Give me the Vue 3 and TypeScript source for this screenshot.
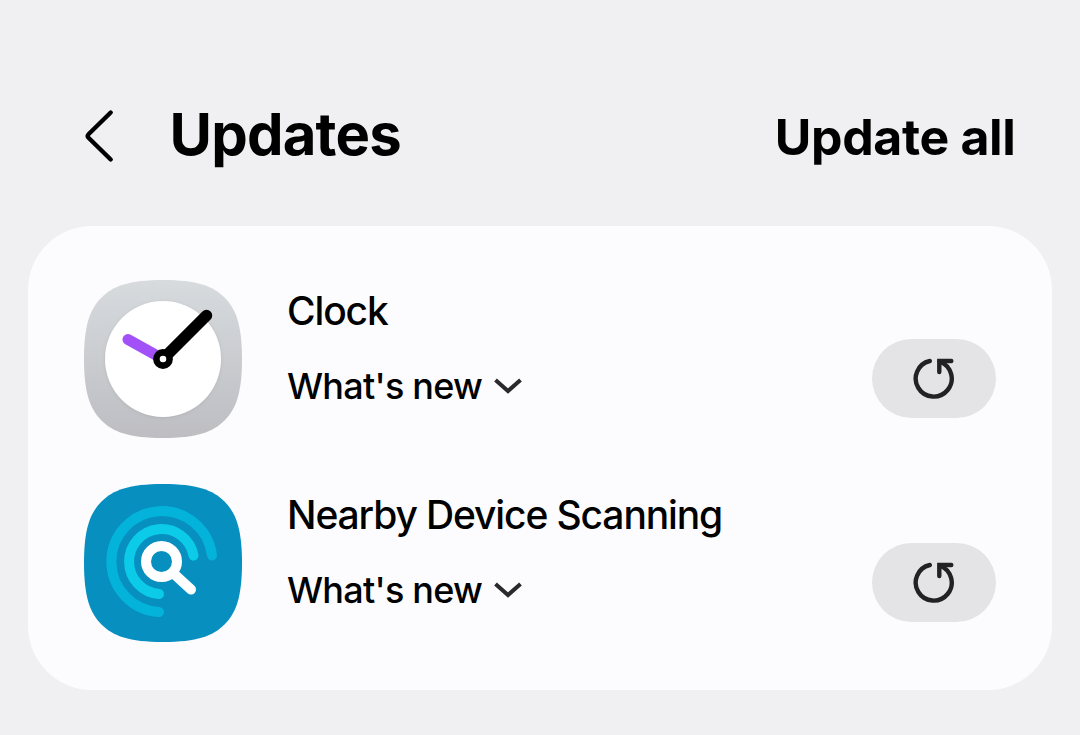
<script setup lang="ts">
interface AppUpdate {
  id: 'clock' | 'scan'
  name: string
}

const updates: AppUpdate[] = [
  { id: 'clock', name: 'Clock' },
  { id: 'scan', name: 'Nearby Device Scanning' },
]

const squircle =
  'M0 79C0 45 6 29 17.500 17.500S45 0 79 0S129 6 140.500 17.500S158 45 158 79S152 129 140.500 140.500S113 158 79 158S29 152 17.500 140.500S0 113 0 79Z'
</script>

<template>
  <main class="screen">
    <header class="bar">
      <button class="back" aria-label="Back">
        <svg width="32" height="56" viewBox="0 0 32 56">
          <path d="M26.700 4.5L4.500 26.2Q2.700 28 4.500 29.8L26.700 51.5" fill="none" stroke="#000" stroke-width="4.4" stroke-linecap="round" />
        </svg>
      </button>
      <h1 class="title">Updates</h1>
      <button class="all">Update all</button>
    </header>

    <section class="card">
      <article v-for="app in updates" :key="app.id" class="row">
        <svg v-if="app.id === 'clock'" class="icon" viewBox="0 0 158 158">
          <defs>
            <linearGradient id="silver" x1="0" y1="0" x2="0" y2="1">
              <stop offset="0" stop-color="#d7dbde" />
              <stop offset="1" stop-color="#bdbdc2" />
            </linearGradient>
            <filter id="soft" x="-10%" y="-10%" width="120%" height="120%">
              <feDropShadow dx="0" dy="0.5" stdDeviation="1.5" flood-color="#777" flood-opacity="0.25" />
            </filter>
          </defs>
          <path :d="squircle" fill="url(#silver)" />
          <circle cx="79" cy="79" r="58" fill="#fff" filter="url(#soft)" />
          <path d="M44 59.5L79 79" stroke="#a251f8" stroke-width="11" stroke-linecap="round" />
          <path d="M79 79L122.500 35.500" stroke="#000" stroke-width="11.500" stroke-linecap="round" />
          <circle cx="79" cy="79" r="6.600" fill="#fff" stroke="#000" stroke-width="6.600" />
        </svg>
        <svg v-else class="icon" viewBox="0 0 158 158">
          <path :d="squircle" fill="#078fc0" />
          <g fill="none" stroke-linecap="round">
            <path d="M128 71.500A50.500 50.500 0 1 0 75 128" stroke="#04b3da" stroke-width="10" />
            <path d="M109.500 71.500A32.500 32.500 0 1 0 75 110" stroke="#0ccbe9" stroke-width="10" />
            <circle cx="77.500" cy="77.500" r="15.500" stroke="#fff" stroke-width="10" />
            <path d="M89 89L107 105.500" stroke="#fff" stroke-width="10" />
          </g>
        </svg>

        <div class="info">
          <h2 class="name">{{ app.name }}</h2>
          <button class="news">
            <span class="label">What's new</span>
            <svg width="28" height="16" viewBox="0 0 28 16">
              <path d="M1.500 2L14 13L26.500 2" fill="none" stroke="#2a2a2c" stroke-width="4" />
            </svg>
          </button>
        </div>

        <button class="update" aria-label="Update">
          <svg width="44" height="44" viewBox="0 0 44 44" fill="none" stroke="#222224" stroke-width="4.400">
            <path d="M17.800 4A18 18 0 1 0 28 4.700" stroke-linecap="round" />
            <path d="M27.300 15V4H39.300" stroke-linecap="round" />
          </svg>
        </button>
      </article>
    </section>
  </main>
</template>

<style>
body {
  margin: 0;
  background: #f0f0f2;
}
</style>

<style scoped>
.screen {
  box-sizing: border-box;
  width: 1080px;
  height: 735px;
  padding: 94px 28px 0;
  overflow: hidden;
  background: #f0f0f2;
  color: #000;
  font-family: Inter, "Noto Sans", sans-serif;
}
button {
  margin: 0;
  padding: 0;
  border: 0;
  background: none;
  color: inherit;
  font: inherit;
}
h1,
h2 {
  margin: 0;
}
svg {
  display: block;
  flex: none;
}
.bar {
  display: flex;
  align-items: flex-start;
  height: 132px;
  padding: 0 36.500px 0 55.500px;
}
.back {
  padding-top: 14px;
}
.title {
  margin-left: 54px;
  font-size: 58px;
  font-weight: 700;
  line-height: 80px;
  letter-spacing: -0.800px;
  white-space: nowrap;
}
.all {
  margin-left: auto;
  font-size: 50px;
  font-weight: 700;
  line-height: 86px;
  letter-spacing: -0.350px;
  white-space: nowrap;
}
.card {
  box-sizing: border-box;
  display: flex;
  flex-direction: column;
  gap: 46px;
  height: 464px;
  padding: 54px 56px 0;
  border-radius: 64px;
  background: #fcfcfe;
}
.row {
  display: flex;
  height: 158px;
}
.icon {
  width: 158px;
  height: 158px;
}
.info {
  flex: 1;
  margin-left: 45px;
}
.name {
  padding-top: 6px;
  font-size: 39px;
  font-weight: 550;
  line-height: 50px;
  letter-spacing: -1.120px;
  white-space: nowrap;
}
.news {
  display: flex;
  align-items: center;
  gap: 12px;
  margin-top: 25px;
  font-size: 36px;
  font-weight: 550;
  line-height: 50px;
  letter-spacing: -0.750px;
  white-space: nowrap;
}
.update {
  display: flex;
  align-items: center;
  justify-content: center;
  width: 124px;
  height: 79px;
  margin-top: 59px;
  border-radius: 40px;
  background: #e4e4e6;
}
</style>
